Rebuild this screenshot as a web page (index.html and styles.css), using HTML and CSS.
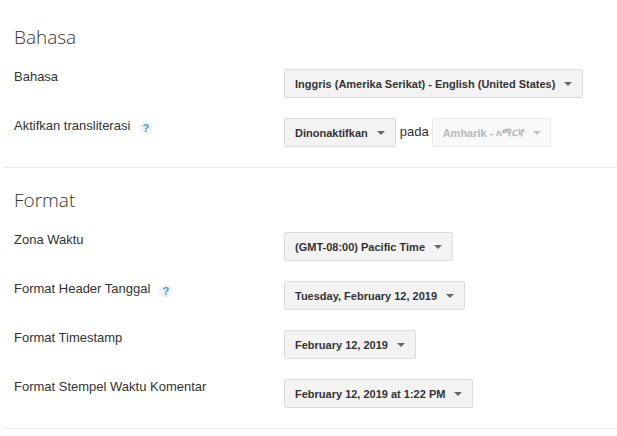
FILE: index.html
```html
<!DOCTYPE html>
<html lang="id">
<head>
  <meta charset="UTF-8" />
  <title>Setelan Bahasa</title>
  <link rel="stylesheet" href="styles.css">
</head>
<body>
  <section class="section">
    <h2>Bahasa</h2>
    <div class="row">
      <div class="label">Bahasa</div>
      <div class="control">
        <div class="select">Inggris (Amerika Serikat) - English (United States)<span class="arrow"></span></div>
      </div>
    </div>
    <div class="row">
      <div class="label">Aktifkan transliterasi <span class="help">?</span></div>
      <div class="control">
        <div class="select">Dinonaktifkan<span class="arrow"></span></div>
        <span class="pada">pada</span>
        <div class="select disabled">Amharik -&nbsp;<span class="script">አማርኛ</span><span class="arrow"></span></div>
      </div>
    </div>
  </section>

  <section class="section">
    <h2>Format</h2>
    <div class="row">
      <div class="label">Zona Waktu</div>
      <div class="control">
        <div class="select">(GMT-08:00) Pacific Time<span class="arrow"></span></div>
      </div>
    </div>
    <div class="row">
      <div class="label">Format Header Tanggal <span class="help">?</span></div>
      <div class="control">
        <div class="select">Tuesday, February 12, 2019<span class="arrow"></span></div>
      </div>
    </div>
    <div class="row">
      <div class="label">Format Timestamp</div>
      <div class="control">
        <div class="select">February 12, 2019<span class="arrow"></span></div>
      </div>
    </div>
    <div class="row">
      <div class="label">Format Stempel Waktu Komentar</div>
      <div class="control">
        <div class="select">February 12, 2019 at 1:22 PM<span class="arrow"></span></div>
      </div>
    </div>
  </section>
</body>
</html>
```

FILE: styles.css
```css
* {
  box-sizing: border-box;
}

body {
  background: #fff;
  margin: 0;
  padding: 0 0 0 4px;
  height: 436px;
  overflow: hidden;
  font-family: "Liberation Sans", Arial, sans-serif;
  color: #333;
}

.section {
  padding: 0 0 0 10px;
  border-bottom: 1px solid #ebebeb;
}

.section:first-child {
  height: 168px;
  padding-top: 27px;
}

.section + .section {
  height: 261px;
  padding-top: 22px;
}

h2 {
  margin: 0 0 21px;
  height: 21px;
  line-height: 21px;
  font-family: "Open Sans", sans-serif;
  font-size: 19px;
  font-weight: 300;
  color: #333;
}

.row {
  display: flex;
  height: 29px;
  margin-bottom: 20px;
}

.label {
  width: 270px;
  font-size: 13px;
  line-height: 16px;
  color: #333;
}

.help {
  display: inline-block;
  width: 14px;
  height: 14px;
  margin-left: 5px;
  border-radius: 50%;
  background: #f3f3f3;
  color: #3b9fc9;
  font-size: 11px;
  font-weight: bold;
  line-height: 14px;
  text-align: center;
  vertical-align: -2px;
}

.control {
  display: flex;
  align-items: flex-start;
}

.select {
  display: flex;
  align-items: center;
  height: 29px;
  padding: 0 10px;
  border: 1px solid #dcdcdc;
  border-radius: 2px;
  background: #f3f3f3;
  font-size: 11px;
  font-weight: bold;
  color: #333;
  white-space: nowrap;
}

.arrow {
  width: 0;
  height: 0;
  margin-left: 9px;
  border-left: 4px solid transparent;
  border-right: 4px solid transparent;
  border-top: 4px solid #666;
}

.pada {
  margin: 0 3px 0 4px;
  font-size: 13px;
  line-height: 28px;
}

.select.disabled {
  padding-right: 9px;
  background: #f9f9f9;
  border-color: #ececec;
  color: #b8b8b8;
}

.script {
  font-size: 10px;
}

.disabled .arrow {
  border-top-color: #c4c4c4;
}
```
